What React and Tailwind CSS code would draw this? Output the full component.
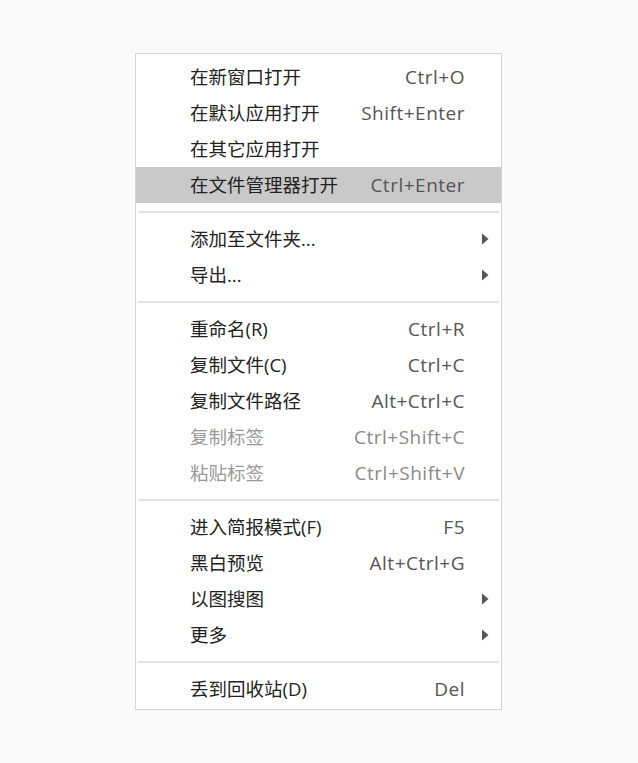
import React from 'react';

const groups = [
  [
    { label: '在新窗口打开', shortcut: 'Ctrl+O' },
    { label: '在默认应用打开', shortcut: 'Shift+Enter' },
    { label: '在其它应用打开' },
    { label: '在文件管理器打开', shortcut: 'Ctrl+Enter', active: true },
  ],
  [
    { label: '添加至文件夹...', submenu: true },
    { label: '导出...', submenu: true },
  ],
  [
    { label: '重命名(R)', shortcut: 'Ctrl+R' },
    { label: '复制文件(C)', shortcut: 'Ctrl+C' },
    { label: '复制文件路径', shortcut: 'Alt+Ctrl+C' },
    { label: '复制标签', shortcut: 'Ctrl+Shift+C', disabled: true },
    { label: '粘贴标签', shortcut: 'Ctrl+Shift+V', disabled: true },
  ],
  [
    { label: '进入简报模式(F)', shortcut: 'F5' },
    { label: '黑白预览', shortcut: 'Alt+Ctrl+G' },
    { label: '以图搜图', submenu: true },
    { label: '更多', submenu: true },
  ],
  [{ label: '丢到回收站(D)', shortcut: 'Del' }],
];

const MenuItem = ({ label, shortcut, submenu, active, disabled }) => (
  <div
    className={`flex h-9 items-center pl-[54px] pr-[12px] ${active ? 'bg-[#c9c9c9]' : ''}`}
  >
    <span className={`flex-1 ${disabled ? 'text-[#9a9a9a]' : 'text-[#222]'}`}>{label}</span>
    {shortcut && (
      <span
        className={`text-[19px] tracking-[0.5px] ${disabled ? 'text-[#8a8a8a]' : 'text-[#555]'}`}
      >
        {shortcut}
      </span>
    )}
    <span className="flex w-6 justify-end">
      {submenu && (
        <svg width="8" height="12" viewBox="0 0 8 12">
          <path d="M1 0.5 L7.5 6 L1 11.5 Z" fill="#555" />
        </svg>
      )}
    </span>
  </div>
);

export default function App() {
  return (
    <div className="min-h-screen bg-[#fafafa] pl-[135px] pt-[53px]">
      <div
        className="w-[367px] border border-[#d4d4d4] bg-white pb-[2px] pt-[5px] text-[18.5px] leading-none"
        style={{ fontFamily: '"Open Sans", "Noto Sans CJK SC", sans-serif' }}
      >
        {groups.map((items, gi) => (
          <div key={gi}>
            {gi > 0 && <div className="mx-[2px] my-2 h-[2px] bg-[#e3e3e3]" />}
            {items.map((item, i) => (
              <MenuItem key={i} {...item} />
            ))}
          </div>
        ))}
      </div>
    </div>
  );
}
